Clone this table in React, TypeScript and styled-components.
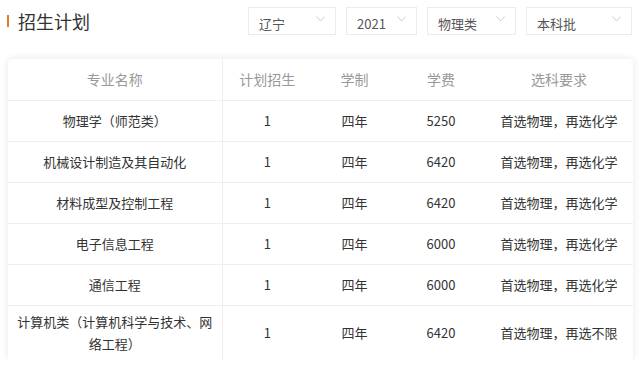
import React from "react";
import styled, { createGlobalStyle } from "styled-components";

const GlobalStyle = createGlobalStyle`
  * { box-sizing: border-box; }
  body {
    margin: 0;
    background: #fff;
    font-family: "Noto Sans CJK SC", "Noto Sans", sans-serif;
    color: #333;
  }
`;

const Page = styled.div`
  width: 640px;
  padding: 7px 7px 0 8px;
`;

const TopBar = styled.div`
  display: flex;
  align-items: center;
  justify-content: space-between;
  height: 28px;
`;

const Title = styled.h2`
  display: flex;
  align-items: center;
  gap: 9px;
  margin: 0 0 0 -1px;
  font-size: 18px;
  font-weight: 400;
  color: #333;
  line-height: 24px;
  &::before {
    content: "";
    display: block;
    width: 2px;
    height: 12px;
    background: #e8772e;
  }
`;

const Filters = styled.div`
  display: flex;
  gap: 10px;
  margin-right: 1px;
`;

const Select = styled.div<{ $w: number }>`
  width: ${(p) => p.$w}px;
  height: 28px;
  border: 1px solid #ebebeb;
  background: #fff;
  display: flex;
  align-items: center;
  justify-content: space-between;
  padding: 0 10px 0 10px;
  font-size: 13px;
  color: #555;
`;

const SelectText = styled.span`
  margin-top: 5px;
  line-height: 18px;
`;

const Chevron = styled.svg`
  margin-top: -5px;
  flex: none;
`;

const Card = styled.div`
  margin-top: 24px;
  background: #fff;
  border-radius: 3px;
  box-shadow: 0 0 8px rgba(0, 0, 0, 0.1);
  overflow: hidden;
`;

const Table = styled.table`
  width: 625px;
  border-collapse: collapse;
  table-layout: fixed;
  font-size: 13px;
`;

const HeadCell = styled.th`
  height: 41px;
  font-weight: 400;
  font-size: 14px;
  color: #999;
  text-align: center;
  padding: 0 8px;
  border-bottom: 1px solid #eee;
  &:first-child { border-right: 1px solid #eee; }
`;

const Row = styled.tr`
  &:last-child td { border-bottom: none; }
`;

const Cell = styled.td`
  height: 41px;
  text-align: center;
  color: #333;
  line-height: 22px;
  padding: 5px 8px;
  border-bottom: 1px solid #eee;
  &:first-child { border-right: 1px solid #eee; }
`;

const widths = [214, 90, 85, 88, 148];

const rows = [
  ["物理学（师范类）", "1", "四年", "5250", "首选物理，再选化学"],
  ["机械设计制造及其自动化", "1", "四年", "6420", "首选物理，再选化学"],
  ["材料成型及控制工程", "1", "四年", "6420", "首选物理，再选化学"],
  ["电子信息工程", "1", "四年", "6000", "首选物理，再选化学"],
  ["通信工程", "1", "四年", "6000", "首选物理，再选化学"],
  ["计算机类（计算机科学与技术、网络工程）", "1", "四年", "6420", "首选物理，再选不限"],
];

const filters: [string, number][] = [
  ["辽宁", 88],
  ["2021", 71],
  ["物理类", 89],
  ["本科批", 106],
];

export default function App() {
  return (
    <Page>
      <GlobalStyle />
      <TopBar>
        <Title>招生计划</Title>
        <Filters>
          {filters.map(([t, w]) => (
            <Select key={t} $w={w}>
              <SelectText>{t}</SelectText>
              <Chevron width="9" height="6" viewBox="0 0 9 6">
                <polyline points="0.5,0.5 4.5,5 8.5,0.5" fill="none" stroke="#ccc" strokeWidth="1" />
              </Chevron>
            </Select>
          ))}
        </Filters>
      </TopBar>
      <Card>
        <Table>
          <colgroup>
            {widths.map((w, i) => (
              <col key={i} style={{ width: w }} />
            ))}
          </colgroup>
          <thead>
            <tr>
              {["专业名称", "计划招生", "学制", "学费", "选科要求"].map((h) => (
                <HeadCell key={h}>{h}</HeadCell>
              ))}
            </tr>
          </thead>
          <tbody>
            {rows.map((r, i) => (
              <Row key={i}>
                {r.map((c, j) => (
                  <Cell key={j}>{c}</Cell>
                ))}
              </Row>
            ))}
          </tbody>
        </Table>
      </Card>
    </Page>
  );
}
